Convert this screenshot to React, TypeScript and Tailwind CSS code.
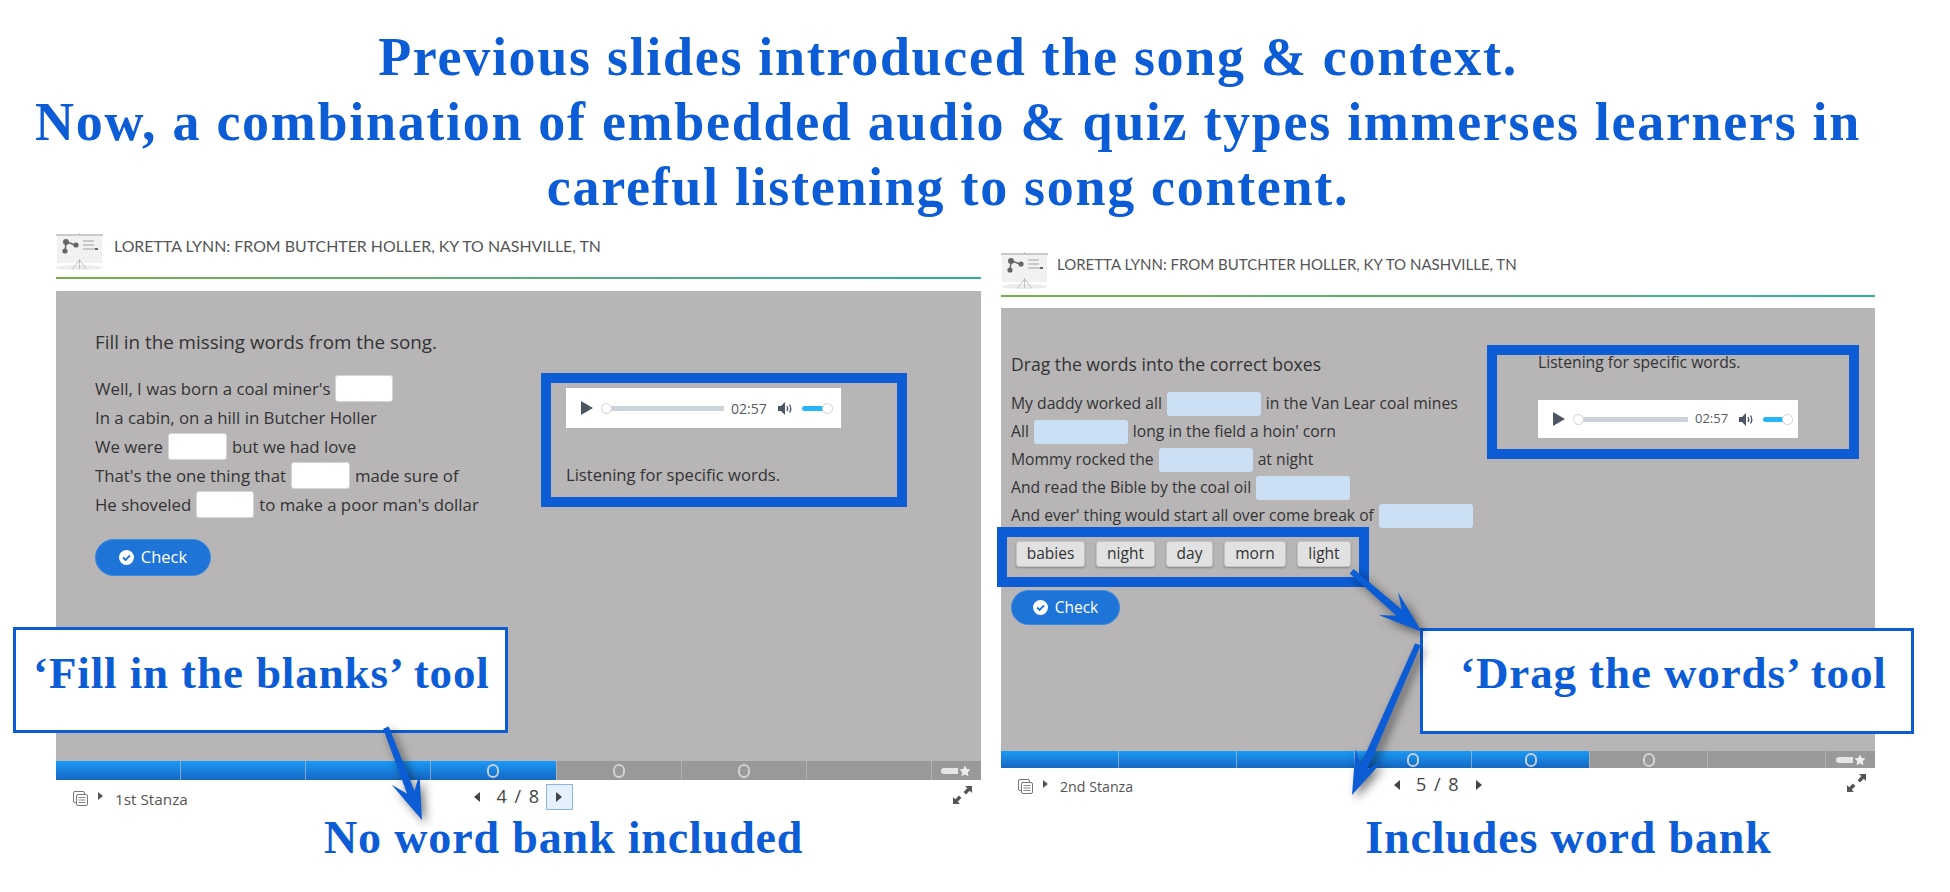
import React from "react";

const BLUE = "#0b5cd5";

// wedge arrow with a swept-back head, the same shape used for all three callouts
function Arrow({ x1, y1, x2, y2 }: { x1: number; y1: number; x2: number; y2: number }) {
  const len = Math.hypot(x2 - x1, y2 - y1);
  const ux = (x2 - x1) / len;
  const uy = (y2 - y1) / len;
  const nx = -uy;
  const ny = ux;
  const p = (along: number, side: number) =>
    `${x2 - ux * along + nx * side},${y2 - uy * along + ny * side}`;
  const tail = `${x1 + nx * 2},${y1 + ny * 2} ${x1 - nx * 4},${y1 - ny * 4}`;
  const points = [tail, p(30, -4), p(44, -15), p(0, 0), p(44, 15), p(30, 4)].join(" ");
  return <polygon points={points} fill={BLUE} />;
}

function PresentationIcon() {
  return (
    <svg width="47" height="38" viewBox="0 0 47 38" className="shrink-0">
      <ellipse cx="23" cy="34.5" rx="23" ry="2.5" fill="#ececec" />
      <rect x="1" y="2" width="45" height="28" fill="#f1f1f1" />
      <rect x="0" y="1" width="47" height="2" fill="#c9c9c9" />
      <path d="M23.5 0v2M23.5 26v10M23.5 27l-7 9M23.5 27l7 9" stroke="#b5b5b5" strokeWidth="0.8" fill="none" />
      <path d="M11 9l8 3M10 10l-1 8" stroke="#666" strokeWidth="1.5" fill="none" />
      <circle cx="10" cy="9" r="3" fill="#666" />
      <circle cx="20" cy="12" r="2.6" fill="#666" />
      <circle cx="9" cy="18" r="2.6" fill="#666" />
      <path d="M27 8h11M27 12h11M27 16h14" stroke="#bbb" strokeWidth="1.4" fill="none" />
      <rect x="39" y="15" width="3" height="2" fill="#666" />
    </svg>
  );
}

function Player({ className, track, time, volume }: { className: string; track: string; time: string; volume: string }) {
  return (
    <div className={`flex items-center bg-white font-['Open_Sans',sans-serif] ${className}`}>
      <svg width="12" height="14" viewBox="0 0 12 14" className="ml-[15px] shrink-0">
        <path d="M0 0l12 7-12 7z" fill="#4b5563" />
      </svg>
      <div className={`relative ml-[9px] h-[5px] shrink-0 bg-[#cdd3db] ${track}`}>
        <div className="absolute left-[-1px] top-[-3px] size-[11px] rounded-full border border-[#cdd3db] bg-white" />
      </div>
      <span className={`ml-[7px] text-[#555b66] ${time}`}>02:57</span>
      <svg width="15" height="13" viewBox="0 0 15 13" className="ml-[11px] shrink-0">
        <path d="M0 4h3l4-4v13l-4-4H0z" fill="#4b5563" />
        <path d="M9 4q1.500 2.500 0 5M11.500 2.500q2.500 4 0 8" stroke="#4b5563" strokeWidth="1.300" fill="none" />
      </svg>
      <div className={`relative ml-[9px] h-[5px] shrink-0 rounded-full bg-[#25b5f8] ${volume}`}>
        <div className="absolute right-[-6px] top-[-3px] size-[11px] rounded-full border border-[#cdd3db] bg-white" />
      </div>
    </div>
  );
}

function CheckButton({ className }: { className: string }) {
  return (
    <div className={`flex items-center justify-center gap-[7px] rounded-full border border-[#3b8ae0] bg-[#1f74d8] text-white ${className}`}>
      <svg width="15" height="15" viewBox="0 0 15 15">
        <circle cx="7.500" cy="7.500" r="7.500" fill="#fff" />
        <path d="M4 7.500l2.500 2.500 4.500-4.500" stroke="#1f74d8" strokeWidth="1.800" fill="none" />
      </svg>
      Check
    </div>
  );
}

function ProgressBar({ blue, height }: { blue: number; height: string }) {
  return (
    <div className={`flex bg-[#999999] ${height}`}>
      {[0, 1, 2, 3, 4, 5, 6].map((i) => (
        <div
          key={i}
          className={`flex flex-1 items-center justify-center ${i > 0 ? "border-l border-[#c4c4c4]/60" : ""} ${
            i < blue ? "bg-gradient-to-b from-[#1a9bf7] to-[#1667c2]" : ""
          }`}
        >
          {i >= 3 && i <= 5 && <div className="h-[14px] w-[12px] rounded-full border-2 border-[#d8d8d8]/90" />}
        </div>
      ))}
      <div className="flex w-[50px] items-center justify-center gap-[1px] border-l border-[#c4c4c4]/60">
        <div className="h-[6px] w-[17px] rounded-l-full bg-[#e6e6e6]" />
        <svg width="12" height="12" viewBox="0 0 24 24">
          <path d="M12 1l3.400 7.200 7.600 1-5.600 5.400 1.400 7.900L12 18.700 5.200 22.500l1.400-7.900L1 9.200l7.600-1z" fill="#eee" />
        </svg>
      </div>
    </div>
  );
}

function Footer({ stanza, page, stanzaSize, focusNext }: { stanza: string; page: string; stanzaSize: string; focusNext?: boolean }) {
  return (
    <div className="grid h-[32px] grid-cols-3 items-start text-[#444]">
      <div className="flex items-center pl-[17px] pt-[8px]">
        <svg width="16" height="16" viewBox="0 0 16 16" className="shrink-0">
          <rect x="0.500" y="0.500" width="11" height="11" rx="1.500" fill="#fff" stroke="#777" />
          <rect x="3.500" y="3.500" width="11" height="11" rx="1.500" fill="#fff" stroke="#777" />
          <path d="M5.500 6.500h7M5.500 9h7M5.500 11.500h7" stroke="#888" />
        </svg>
        <svg width="5" height="8" viewBox="0 0 5 8" className="mb-[6px] ml-[9px] shrink-0">
          <path d="M0 0l5 4-5 4z" fill="#555" />
        </svg>
        <span className={`ml-[12px] text-[#555] ${stanzaSize}`}>{stanza}</span>
      </div>
      <div className="flex items-center justify-center pl-[10px] pt-[3px] text-[18px]">
        <svg width="6" height="10" viewBox="0 0 6 10">
          <path d="M6 0L0 5l6 5z" fill="#444" />
        </svg>
        <span className="ml-[16px] mr-[5px] tracking-[1.500px]">{page}</span>
        <div
          className={`flex h-[26px] w-[27px] items-center justify-center ${
            focusNext ? "border border-[#8ab4f0] bg-[#e6f0fd]" : ""
          }`}
        >
          <svg width="6" height="10" viewBox="0 0 6 10">
            <path d="M0 0l6 5-6 5z" fill="#444" />
          </svg>
        </div>
      </div>
      <div className="flex justify-end pr-[9px] pt-[6px]">
        <svg width="19" height="18" viewBox="0 0 19 18">
          <path d="M12 0h7v7l-2.300-2.300-3.700 3.700-2.400-2.400 3.700-3.700zM0 18v-7l2.300 2.300 3.700-3.700 2.400 2.400-3.700 3.700L7 18z" fill="#555" />
        </svg>
      </div>
    </div>
  );
}

function Header({ height, title }: { height: string; title: string }) {
  return (
    <>
      <div className={`flex items-center ${height}`}>
        <PresentationIcon />
        <span className={`mb-[12px] text-[#555] font-['Lato',sans-serif] ${title}`}>
          LORETTA LYNN: FROM BUTCHTER HOLLER, KY TO NASHVILLE, TN
        </span>
      </div>
      <div className="h-[2px] bg-gradient-to-r from-[#76b043] to-[#2fae9f]" />
    </>
  );
}

function Line({ children, className }: { children: React.ReactNode; className: string }) {
  return <div className={`flex items-center gap-[5px] ${className}`}>{children}</div>;
}

function Blank({ width }: { width: string }) {
  return <div className={`h-[27px] rounded-[3px] border border-[#d5d5d5] bg-white ${width}`} />;
}

function Drop() {
  return <div className="h-[24px] w-[94px] rounded-[3px] bg-[#cbdff5]" />;
}

function Chip({ children, width }: { children: React.ReactNode; width: string }) {
  return (
    <div className={`flex h-[26px] items-center justify-center rounded-[3px] border border-[#c4c4c4] bg-[#e1e1e1] text-[15.5px] shadow-[0_1px_2px_rgba(0,0,0,0.25)] ${width}`}>
      {children}
    </div>
  );
}

function FillSlide() {
  return (
    <div className="flex w-[925px] flex-col">
      <Header height="h-[50px]" title="ml-[11px] text-[15.9px]" />
      <div className="relative mt-[12px] flex h-[470px] flex-col bg-[#b7b5b6] pl-[39px] pt-[40px] text-[16.8px] text-[#333]">
        <div className="h-[22px] text-[18.8px] leading-[22px]">Fill in the missing words from the song.</div>
        <div className="mt-[21px] flex flex-col">
          <Line className="h-[29px]">Well, I was born a coal miner's <Blank width="w-[58px]" /></Line>
          <Line className="h-[29px]">In a cabin, on a hill in Butcher Holler</Line>
          <Line className="h-[29px]">We were <Blank width="w-[59px]" /> but we had love</Line>
          <Line className="h-[29px]">That's the one thing that <Blank width="w-[59px]" /> made sure of</Line>
          <Line className="h-[29px]">He shoveled <Blank width="w-[58px]" /> to make a poor man's dollar</Line>
        </div>
        <CheckButton className="mt-[20px] h-[37px] w-[116px] text-[16.5px]" />
        <div className="absolute left-[485px] top-[82px] flex h-[134px] w-[366px] flex-col border-[10px] border-[#0b5cd5] pl-[15px] pt-[5px]">
          <Player className="h-[40px] w-[275px]" track="w-[122px]" time="text-[14px]" volume="w-[25px]" />
          <div className="mt-[36px] text-[16.6px] leading-[22px]">Listening for specific words.</div>
        </div>
      </div>
      <ProgressBar blue={4} height="h-[19px]" />
      <Footer stanza="1st Stanza" page="4 / 8" stanzaSize="text-[15.3px]" focusNext />
    </div>
  );
}

function DragSlide() {
  return (
    <div className="mt-[19px] flex w-[874px] flex-col">
      <Header height="h-[49px]" title="ml-[9px] text-[15px]" />
      <div className="relative mt-[11px] flex h-[443px] flex-col bg-[#b7b5b6] pl-[10px] pt-[45px] text-[15.7px] text-[#333]">
        <div className="h-[22px] text-[17.6px] leading-[22px]">Drag the words into the correct boxes</div>
        <div className="mt-[15px] flex flex-col">
          <Line className="h-[28px]">My daddy worked all <Drop /> in the Van Lear coal mines</Line>
          <Line className="h-[28px]">All <Drop /> long in the field a hoin' corn</Line>
          <Line className="h-[28px]">Mommy rocked the <Drop /> at night</Line>
          <Line className="h-[28px]">And read the Bible by the coal oil <Drop /></Line>
          <Line className="h-[28px]">And ever' thing would start all over come break of <Drop /></Line>
        </div>
        <div className="ml-[5px] mt-[11px] flex gap-[11px]">
          <Chip width="w-[69px]">babies</Chip>
          <Chip width="w-[59px]">night</Chip>
          <Chip width="w-[47px]">day</Chip>
          <Chip width="w-[62px]">morn</Chip>
          <Chip width="w-[54px]">light</Chip>
        </div>
        <CheckButton className="mt-[23px] h-[35px] w-[109px] text-[15.5px]" />
        <div className="absolute left-[486px] top-[37px] flex h-[114px] w-[372px] flex-col border-[10px] border-[#0b5cd5] pl-[41px]">
          <div className="h-[18px] text-[15.7px] leading-[15px]">Listening for specific words.</div>
          <Player className="mt-[27px] h-[38px] w-[260px]" track="w-[114px]" time="text-[13px]" volume="w-[24px]" />
        </div>
        <div className="absolute left-[-4px] top-[219px] h-[60px] w-[372px] border-[10px] border-[#0b5cd5]" />
      </div>
      <ProgressBar blue={5} height="h-[17px]" />
      <Footer stanza="2nd Stanza" page="5 / 8" stanzaSize="text-[14.2px]" />
    </div>
  );
}

function Callout({ className, children }: { className: string; children: React.ReactNode }) {
  return (
    <div className={`absolute flex h-[106px] border-[3px] border-[#0b5cd5] bg-white font-['Liberation_Serif',serif] text-[45px] font-bold leading-[46px] tracking-[0.9px] text-[#0b5cd5] ${className}`}>
      {children}
    </div>
  );
}

export default function App() {
  return (
    <div className="relative h-[892px] w-[1950px] overflow-hidden bg-white font-['Open_Sans',sans-serif]">
      <div className="pr-[54px] pt-[25px] text-center font-['Liberation_Serif',serif] text-[54px] font-bold leading-[65px] tracking-[1.7px] text-[#0b5cd5]">
        <div>Previous slides introduced the song &amp; context.</div>
        <div>Now, a combination of embedded audio &amp; quiz types immerses learners in</div>
        <div>careful listening to song content.</div>
      </div>

      <div className="mt-[7px] flex gap-[20px] pl-[56px]">
        <FillSlide />
        <DragSlide />
      </div>

      <div className="mt-[1px] flex font-['Liberation_Serif',serif] text-[46px] font-bold leading-[50px] tracking-[0.85px] text-[#0b5cd5]">
        <div className="ml-[324px]">No word bank included</div>
        <div className="ml-[562px]">Includes word bank</div>
      </div>

      <Callout className="left-[13px] top-[627px] w-[495px] pl-[17px] pt-[20px]">‘Fill in the blanks’ tool</Callout>
      <Callout className="left-[1420px] top-[628px] w-[494px] pl-[37px] pt-[19px]">‘Drag the words’ tool</Callout>

      <svg className="pointer-events-none absolute left-0 top-0 drop-shadow-[4px_4px_5px_rgba(0,0,0,0.5)]" width="1950" height="892">
        <Arrow x1={385} y1={728} x2={422} y2={820} />
        <Arrow x1={1351} y1={572} x2={1422} y2={632} />
        <Arrow x1={1417} y1={644} x2={1352} y2={795} />
      </svg>
    </div>
  );
}
